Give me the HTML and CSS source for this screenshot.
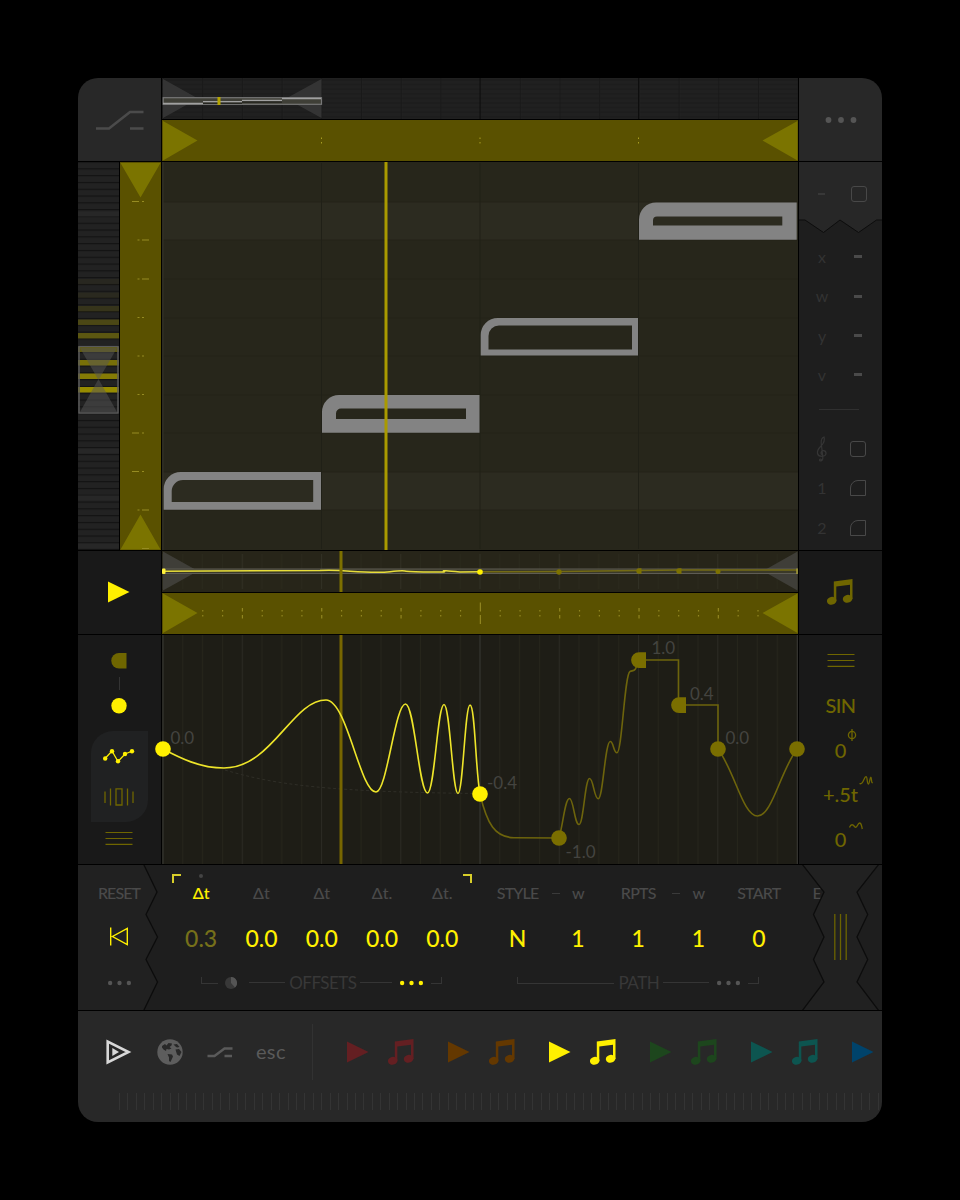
FILE: index.html
```html
<!DOCTYPE html>
<html lang="en">
<head>
  <meta charset="UTF-8" />
  <meta name="viewport" content="width=device-width, initial-scale=1.0"/>
  <title>Sequencer</title>
  <link rel="stylesheet" href="styles.css">
</head>
<body>
  <svg class="defs" width="0" height="0">
    <symbol id="music" viewBox="0 0 26 26">
      <path d="M6.8 2.5L25.5 0V20H23V5.7L9.3 7.5V22H6.8Z"/>
      <ellipse cx="4.7" cy="21.8" rx="4.8" ry="3.9" transform="rotate(-12 4.7 21.8)"/>
      <ellipse cx="20.6" cy="19.8" rx="4.8" ry="3.9" transform="rotate(-12 20.6 19.8)"/>
    </symbol>
    <symbol id="play" viewBox="0 0 22 22"><path d="M0 0.5L21.5 11L0 21.5Z"/></symbol>
    <symbol id="menu" viewBox="0 0 28 14"><path d="M.5 1.5H27.5M.5 7.5H27.5M.5 13.3H27.5" fill="none" stroke="currentColor" stroke-width="1.2"/></symbol>
    <symbol id="dots" viewBox="0 0 32 8"><circle cx="3.5" cy="4" r="2.9"/><circle cx="16" cy="4" r="2.9"/><circle cx="28.5" cy="4" r="2.9"/></symbol>
  </svg>

  <div class="device">
    <div class="corner">
      <svg class="slope" viewBox="0 0 48 20" width="48" height="20"><path d="M0 18.5H13L34 2H47.5M34 18.5H47.5"/></svg>
    </div>

    <div class="stack">
      <svg viewBox="162 78 636 41">
        <defs>
          <pattern id="rows" x="162" y="79" width="20" height="4.6" patternUnits="userSpaceOnUse"><path d="M0 1H20" stroke="#1a1a1a"/></pattern>
          <pattern id="cols" x="162.5" y="78" width="39.7" height="41" patternUnits="userSpaceOnUse"><path d="M.5 0V41" stroke="#191919"/></pattern>
        </defs>
        <rect x="162" y="78" width="636" height="41" fill="#202020"/>
        <rect x="162" y="78" width="636" height="41" fill="url(#rows)"/>
        <rect x="162" y="78" width="636" height="41" fill="url(#cols)"/>
        <path d="M480 78V119M638.5 78V119" stroke="#0e0e0e"/>
        <path d="M163 79L198 98.5L163 118ZM321.5 79L286 98.5L321.5 118Z" fill="#383838" opacity=".85"/>
        <rect x="163.2" y="97.7" width="158.3" height="6.6" fill="#3f3f37" stroke="#777" stroke-width="1.2"/>
        <path d="M163 103.6H203M203 101.8H242M242 100.4H282M282 98.6H321" stroke="#a0a0a0" stroke-width="1.5"/>
        <path d="M203 103.2H242M242 102H282" stroke="#15150f"/>
        <path d="M219 97V105" stroke="#b5a500" stroke-width="3"/>
      </svg>
      <svg viewBox="162 120 636 41">
        <rect x="162" y="120" width="636" height="41" fill="#5a5100"/>
        <path d="M163 121L197.500 140.500L163 160.500ZM797.500 121L762.500 140.500L797.500 160.500Z" fill="#7b7400"/>
        <path d="M321.500 137.500V139M321.500 142V143.500M480 137.500V139M480 142V143.500M638.500 137.500V139M638.500 142V143.500" stroke="#a79d22"/>
      </svg>
    </div>

    <div class="corner"><svg class="more" width="32" height="8"><use href="#dots"/></svg></div>

    <div class="keys">
      <svg viewBox="78 162 41 388">
        <defs>
          <pattern id="semis" x="78" y="161.500" width="41" height="6.800" patternUnits="userSpaceOnUse">
            <rect width="41" height="6.800" fill="#222"/><rect width="41" height="1.200" fill="#131313"/>
          </pattern>
        </defs>
        <rect x="78" y="162" width="41" height="388" fill="url(#semis)"/>
        <path d="M78 214H119M78 451H119M78 498H119M78 546H119" stroke="#272727" stroke-width="5"/>
        <g id="degrees"></g>
        <path d="M80 348H117L98.500 380ZM80 412H117L98.500 379Z" fill="#555" opacity=".5"/>
        <rect x="79" y="346.500" width="39" height="66.500" fill="none" stroke="#5a5a5a" stroke-width="1.500"/>
      </svg>
      <svg viewBox="120 162 41 388">
        <rect x="120" y="162" width="41" height="388" fill="#5a5100"/>
        <path d="M120.500 163H160.500L140.500 197.500ZM120.500 549.500H160.500L140.500 514.500Z" fill="#7b7400"/>
        <g stroke="#968c22" stroke-width="1">
          <path d="M132 201.500H139M142 201.500H144M132 433H139M142 433H144M132 471.500H139M142 471.500H144"/>
          <path d="M137.500 240H139.500M142 240H149M137.500 279H139.500M142 279H149M137.500 510H139.500M142 510H149M142 548.500H149"/>
          <path d="M137.500 317.500H139.500M142 317.500H144M137.500 356H139.500M142 356H144M137.500 394.500H139.500M142 394.500H144"/>
        </g>
      </svg>
    </div>

    <svg class="roll" viewBox="162 162 636 388">
      <rect x="162" y="162" width="636" height="388" fill="#27261b"/>
      <path d="M163 202H798V240H163ZM163 472H798V510H163Z" fill="#2c2b20"/>
      <path d="M163 202H798M163 240H798M163 279H798M163 318H798M163 356H798M163 395H798M163 433H798M163 472H798M163 510H798" stroke="#242319"/>
      <path d="M321.500 163V549M480 163V549M638.500 163V549" stroke="#202017"/>
      <path d="M163 162V550" stroke="#34332a"/>
      <g fill="#838383" fill-rule="evenodd">
        <path d="M163.700 509.700V489A17 17 0 0 1 180.700 472H321V509.700ZM171.700 502H313.200V480H183A11.300 11.300 0 0 0 171.700 491Z"/>
        <path d="M322 432.700V412A17 17 0 0 1 339 395H479.500V432.700ZM336 419H466V408.500H341A5 5 0 0 0 336 413.500Z"/>
        <path d="M480.700 355.500V335A17 17 0 0 1 497.700 318H638V355.500ZM488.500 349.500H632V325.500H499A10.500 10.500 0 0 0 488.500 336Z"/>
        <path d="M639 239.800V219.500A17 17 0 0 1 656 202.500H796.700V239.800ZM653 225.500H782.300V216.500H657A4 4 0 0 0 653 220.500Z"/>
      </g>
      <path d="M386 162V550" stroke="#a99a00" stroke-width="3"/>
    </svg>

    <div class="tools">
      <svg class="torn" viewBox="799 162 83 72" width="83" height="72"><path d="M798 161H883V220H876.500L858.500 232.500L840 220L823.500 232.500L805 220H798Z"/></svg>
      <div class="tool tool-top"><span class="dash"></span><i class="box"></i></div>
      <div class="tool"><span>x</span><b></b></div>
      <div class="tool"><span>w</span><b></b></div>
      <div class="tool"><span>y</span><b></b></div>
      <div class="tool"><span>v</span><b></b></div>
      <hr>
      <div class="tool">
        <svg class="clef" viewBox="0 0 12 26" width="12" height="26"><path d="M4.500 24.500C6.500 25 7 23 6.800 21L5.200 7C5 3 6.500 1.500 8 1C9 4 8 7 5 10C2 13 1 15 1.500 17.500C2.500 21.500 9.500 21 10 17.500C10.200 14 5 13.500 5 17C5 18 5.500 18.500 6.200 18.700"/><circle cx="4.500" cy="24" r="1"/></svg>
        <i class="box"></i>
      </div>
      <div class="tool"><span>1</span><i class="box cut"></i></div>
      <div class="tool"><span>2</span><i class="box cut"></i></div>
    </div>

    <div class="cell dark"><svg class="lit" width="22" height="22"><use href="#play"/></svg></div>

    <div class="stack">
      <svg viewBox="162 551 636 41">
        <defs><pattern id="beats" x="162.500" y="551" width="79.250" height="41" patternUnits="userSpaceOnUse">
          <path d="M20.300 3V38M40 3V38M60 3V38" stroke="#2a291c"/><path d="M.5 3V38" stroke="#313024"/>
        </pattern></defs>
        <rect x="162" y="551" width="636" height="41" fill="#272519"/>
        <rect x="162" y="551" width="636" height="41" fill="url(#beats)"/>
        <path d="M163 551.500L198 571L163 590.500ZM797.500 551.500L763 571L797.500 590.500Z" fill="#3f3e38"/>
        <rect x="163" y="569" width="634.500" height="4.500" fill="#3a3929" stroke="#5e5c54"/>
        <path d="M480 571.800L560 571.500L640 570.500L680 570H797" stroke="#746b14" fill="none" stroke-width="1.500"/>
        <path d="M163 571.300L320 570.500Q335 570 350 571.200Q378 573 390 571.700T405 571T428 572T444 571.200T460 572L480 571.800" stroke="#e8de3a" fill="none" stroke-width="1.500"/>
        <path d="M341 551V592" stroke="#7d7000" stroke-width="3"/>
        <circle cx="480" cy="572" r="2.800" fill="#fff000"/><rect x="162" y="568.500" width="3.500" height="5.500" rx="1" fill="#fff13a"/>
        <g fill="#7d7200"><circle cx="559" cy="572" r="2.700"/><path d="M639 568.300H641.500V573.700H639A2.700 2.700 0 0 1 639 568.300ZM679 568.300H681.500V573.700H679A2.700 2.700 0 0 1 679 568.300Z"/><circle cx="718" cy="571.500" r="2.500"/></g>
        <path d="M797 568.500V574" stroke="#a49b35" stroke-width="1.500"/>
      </svg>
      <svg viewBox="162 593 636 41">
        <rect x="162" y="593" width="636" height="41" fill="#5a5100"/>
        <path d="M163 593.500L197.500 613L163 633ZM797.500 593.500L762.500 613L797.500 633Z" fill="#7b7400"/>
        <g id="ticks" fill="#918620"></g>
      </svg>
    </div>

    <div class="cell dark"><svg class="dim" width="26" height="26"><use href="#music"/></svg></div>

    <div class="modes">
      <svg class="dim" width="16" height="16"><path d="M8 0H15.500V15.500H8A7.750 7.750 0 0 1 8 0Z"/></svg>
      <span class="link"></span>
      <svg class="lit" width="16" height="16"><circle cx="8" cy="7.800" r="7.700"/></svg>
      <div class="tabs">
        <svg class="lit" viewBox="0 0 32 16" width="32" height="16"><path d="M2 10.500L9 3L15 13.500L22 6L29.500 3" fill="none" stroke="currentColor" stroke-width="1.300"/><circle cx="2.200" cy="10.500" r="2.200"/><circle cx="9" cy="3.200" r="2.200"/><circle cx="15" cy="13.200" r="2.200"/><circle cx="22" cy="6" r="2.200"/><circle cx="29" cy="3.200" r="2.200"/></svg>
        <svg class="dim" viewBox="0 0 30 18" width="30" height="18"><path d="M1 3.500V15M6.500 .5V17.500M12 .8H18V17H12ZM23.500 .5V17.500M29 3.500V15" fill="none" stroke="currentColor" stroke-width="1.300"/></svg>
      </div>
      <svg class="dim" width="28" height="14"><use href="#menu"/></svg>
    </div>

    <svg class="graph" viewBox="162 635 636 229">
      <defs><pattern id="grid" x="162.500" y="635" width="79.250" height="229" patternUnits="userSpaceOnUse">
        <path d="M20.300 0V229M40 0V229M60 0V229" stroke="#26251b"/><path d="M.5 0V229" stroke="#2b2a23"/>
      </pattern></defs>
      <rect x="162" y="635" width="636" height="229" fill="#1e1d16"/>
      <rect x="162" y="635" width="636" height="229" fill="url(#grid)"/>
      <path d="M163 635V864M480 635V864M797.500 635V864" stroke="#33322e"/>
      <path d="M225 770C275 785 330 792 480 793.500" fill="none" stroke="#2f2e27" stroke-dasharray="3 2.500"/>
      <path d="M341 635V864" stroke="#776600" stroke-width="3"/>
      <g class="values">
        <text x="170.500" y="743.500">0.0</text><text x="487" y="788.500">-0.4</text><text x="565.500" y="858">-1.0</text>
        <text x="651.500" y="654">1.0</text><text x="690" y="699.500">0.4</text><text x="725.500" y="743.500">0.0</text>
      </g>
      <path class="curve-dim" d="M480 794C487 824 495 837.500 514 837.700L559 838C563 825 565 798.500 569.500 798.500C573.500 798.500 574.500 824.500 579 824.500C583.500 824.500 585 778.500 589.500 778.500C593.500 778.500 594 798.700 598.300 798.700C603 798.700 605 741.500 610.300 741.500C613.500 741.500 613.500 752.700 617 752.700C622 752.700 624.500 674 630 671.500C634 670 636 672 637 662L639 660H678.500V705H718V749C735 772 743 816 757.500 816C772 816 780 772 797 749"/>
      <path class="curve" d="M163 749C180 758 200 768 224 768C272 768 292 700 326 700C347 700 360 792 376 792C387 792 395 704 405.500 704C414.500 704 419 793 427.500 793C434.500 793 437.500 704.500 444 704.500C450 704.500 452.500 793.500 458 793.500C463 793.500 465 705 470 705C475 705 475.500 770 480 794"/>
      <g fill="#7a6e00">
        <circle cx="559" cy="838" r="7.800"/><circle cx="718" cy="749" r="7.800"/>
        <path d="M639 652.200H646V668H639A7.900 7.900 0 0 1 639 652.200ZM679 697.200H686V713H679A7.900 7.900 0 0 1 679 697.200Z"/>
        <circle cx="797" cy="749" r="7.800"/>
      </g>
      <g fill="#fff000"><circle cx="163" cy="749" r="7.800"/><circle cx="480" cy="794" r="7.800"/></g>
    </svg>

    <div class="wave dim">
      <div><svg width="28" height="14"><use href="#menu"/></svg></div>
      <div class="shape">SIN</div>
      <div>0<svg class="sup phi" viewBox="0 0 10 12" width="10" height="12"><circle cx="5" cy="6" r="3.600"/><path d="M5 0V12"/></svg></div>
      <div>+.5t<svg class="sup chirp" viewBox="0 0 15 9" width="15" height="9"><path d="M.5 7.500C4 9.500 5 .7 7 .7C8.500 .7 8 8 9.300 8S10.800 1.200 11.800 1.200S12 8 13.800 6.500"/></svg></div>
      <div>0<svg class="sup ripple" viewBox="0 0 14 8" width="14" height="8"><path d="M.5 5.500C2 1.500 4 2.500 5.500 4.500C8 7.500 8.500 1 10.500 1S12.500 4 13.300 7"/></svg></div>
    </div>

    <div class="params">
      <svg class="tear" viewBox="78 865 83 145" width="83" height="145"><path d="M77 864H143.500L157 892L146 914.500L157.500 937L146 959.500L157.500 982L143.500 1011H77Z"/></svg>
      <div class="reset">
        <span>RESET</span>
        <svg class="lit" viewBox="0 0 20 20" width="20" height="20"><path d="M1.700 .5V18.500M18.300 1.500V17.500L3.500 9.500Z" fill="none" stroke="currentColor" stroke-width="1.400"/></svg>
        <svg class="more" width="25" height="6"><use href="#dots"/></svg>
      </div>
      <div class="group offsets">
        <div class="field on"><label>Δt</label><span>0.3</span></div>
        <div class="field"><label>Δt</label><span>0.0</span></div>
        <div class="field"><label>Δt</label><span>0.0</span></div>
        <div class="field"><label>Δt.</label><span>0.0</span></div>
        <div class="field"><label>Δt.</label><span>0.0</span></div>
        <div class="legend">
          <i class="end start"></i><svg class="ball" width="12" height="12"><circle cx="6" cy="6" r="6" fill="#383838"/><path d="M6 0A6 6 0 0 1 10 10.500L6 6Z" fill="#555"/></svg>
          <i class="rule"></i><span>OFFSETS</span><i class="rule short"></i>
          <svg class="lit" width="25" height="6"><use href="#dots"/></svg><i class="end"></i>
        </div>
      </div>
      <div class="group path">
        <div class="field linked"><label>STYLE</label><span>N</span></div>
        <div class="field"><label>w</label><span>1</span></div>
        <div class="field linked"><label>RPTS</label><span>1</span></div>
        <div class="field"><label>w</label><span>1</span></div>
        <div class="field"><label>START</label><span>0</span></div>
        <div class="field last"><label>E</label></div>
        <div class="legend">
          <i class="end start"></i><span>PATH</span><i class="rule"></i>
          <svg class="more" width="25" height="6"><use href="#dots"/></svg><i class="end"></i>
        </div>
      </div>
      <svg class="tear right" viewBox="799 865 83 145" width="83" height="145">
        <path d="M802 864L824 892L813.500 914.500L824 937L813.500 959.500L824 982L802 1011H879L857 982L867.700 959.500L857 937L867.700 914.500L857 892L879 864Z"/>
        <path class="grip" d="M834.800 914V960M840.500 914V960M846.200 914V960"/>
      </svg>
    </div>

    <div class="footer">
      <div class="bar">
        <div class="slot"><svg viewBox="0 0 26 26" width="26" height="26"><path d="M1.700 2.500V23.500L22.500 13Z" fill="none" stroke="#d8d8d8" stroke-width="2.600"/><path d="M6.300 9V17L13 13Z" fill="#d8d8d8"/></svg></div>
        <div class="slot"><svg viewBox="0 0 26 26" width="26" height="26"><circle cx="13" cy="13" r="12.700" fill="#5d5d5d"/><path d="M5 7L8 5L9.500 6.500L11.500 4L15 4.500L14.500 6.500L12.500 8L14.500 9.500L12 10.500L9.500 10L9 12L6.500 10.500L5 8.500ZM16.500 5.500L20 5L22.500 8L20 8.500L18.500 7.500ZM18.500 10.500L22 10L24.500 13L22.500 17L20 15.500ZM10.500 15L15 15.500L16 17.500L13.500 23L12 22L12 18.500Z" fill="#282828"/></svg></div>
        <div class="slot"><svg viewBox="0 0 26 12" width="26" height="12"><path d="M.5 10H7.500L17.500 2.500H25.500M17.500 10H25" fill="none" stroke="#5a5a5a" stroke-width="2.400"/></svg></div>
        <div class="slot esc">esc</div>
        <span class="sep"></span>
        <div class="tracks">
          <div class="track red"><svg width="22" height="22"><use href="#play"/></svg><svg width="26" height="26"><use href="#music"/></svg></div>
          <div class="track orange"><svg width="22" height="22"><use href="#play"/></svg><svg width="26" height="26"><use href="#music"/></svg></div>
          <div class="track lit"><svg width="22" height="22"><use href="#play"/></svg><svg width="26" height="26"><use href="#music"/></svg></div>
          <div class="track green"><svg width="22" height="22"><use href="#play"/></svg><svg width="26" height="26"><use href="#music"/></svg></div>
          <div class="track teal"><svg width="22" height="22"><use href="#play"/></svg><svg width="26" height="26"><use href="#music"/></svg></div>
          <div class="track blue"><svg width="22" height="22"><use href="#play"/></svg></div>
        </div>
      </div>
      <div class="jog"></div>
    </div>
  </div>

  <script>
    const NS = 'http://www.w3.org/2000/svg';

    function addRect(parent, x, y, width, height, opacity) {
      const rect = document.createElementNS(NS, 'rect');
      const attrs = { x, y, width, height, opacity };
      Object.keys(attrs).forEach(key => rect.setAttribute(key, attrs[key]));
      parent.appendChild(rect);
    }

    // Scale degrees, getting brighter toward the playing note
    const degrees = document.getElementById('degrees');
    degrees.setAttribute('fill', '#968b00');
    [0.05, 0.07, 0.18, 0.36, 0.5, 0.55, 0.75, 0.85, 1].forEach((opacity, i) => {
      addRect(degrees, 78, 279 + i * 13.5, 41, 5.5, opacity);
    });

    // Beat ruler: dots on steps, dashes on beats, a long dash in the middle
    const ticks = document.getElementById('ticks');
    for (let i = 2; i < 31; i++) {
      const x = 162.5 + i * 19.83;
      const len = i === 16 ? 9 : i % 4 === 0 ? 3.5 : 1.5;
      addRect(ticks, x, 611.5 - len, 1.2, len, 1);
      addRect(ticks, x, 615, 1.2, len, 1);
    }
  </script>
</body>
</html>
```

FILE: styles.css
```css
* {
  box-sizing: border-box;
}
body {
  margin: 0;
  height: 1200px;
  padding: 78px;
  background: #000;
  color: #4a4a4a;
  font-family: Lato, "Liberation Sans", sans-serif;
  overflow: hidden;
}
svg {
  display: block;
  flex-shrink: 0;
  fill: currentColor;
}
.defs {
  position: absolute;
}
.device {
  width: 804px;
  height: 1044px;
  display: grid;
  grid-template-columns: 83px 636px 83px;
  grid-template-rows: 83px 388px 83px 229px 145px 111px;
  gap: 1px;
  border-radius: 20px;
  overflow: hidden;
}
.corner, .cell {
  display: flex;
  align-items: center;
  justify-content: center;
  background: #282828;
}
.cell {
  padding: 0 1px 2px 0;
}
.dark {
  background: #191919;
}
.lit {
  color: #fff000;
}
.dim {
  color: #6f6600;
}
.more {
  color: #555;
}
.slope {
  fill: none;
  stroke: #4b4b4b;
  stroke-width: 2.6;
}
.stack {
  display: grid;
  grid-template-rows: 41px 41px;
  gap: 1px;
}
.keys {
  display: grid;
  grid-template-columns: 41px 41px;
  gap: 1px;
}

/* note tools */
.tools {
  position: relative;
  background: #1e1e1e;
}
.torn {
  position: absolute;
  top: 0;
  left: 0;
  fill: #272727;
  stroke: #0d0d0d;
}
.tool {
  position: relative;
  height: 39.3px;
  padding: 0 16px 0 10px;
  display: flex;
  align-items: center;
  justify-content: space-between;
  font-size: 16px;
  color: #333;
}
.tool span {
  width: 26px;
  padding-bottom: 1px;
  text-align: center;
}
.tool b {
  width: 8px;
  height: 3px;
  margin-right: 4px;
  background: #4a4a4a;
}
.tool-top {
  margin: 12px 0 24px;
  padding-right: 15px;
}
.tool .dash {
  width: 7px;
  height: 2px;
  margin-left: 9px;
  padding: 0;
  background: #383838;
}
.box {
  width: 16px;
  height: 16px;
  border: 1.5px solid #484848;
  border-radius: 3px;
}
.box.cut {
  border-radius: 8px 0 0 0;
}
.clef {
  margin-left: 7px;
  fill: none;
  stroke: #353535;
  stroke-width: 1.2;
}
.tools hr {
  width: 40px;
  height: 1px;
  margin: 15px auto 19px 20px;
  border: 0;
  background: #303030;
}

/* curve editor */
.graph {
  position: relative;
  overflow: visible;
  z-index: 1;
}
.curve, .curve-dim {
  fill: none;
  stroke: #eee52a;
  stroke-width: 1.6;
}
.curve-dim {
  stroke: #6d640c;
}
.values {
  font-size: 17px;
  fill: #444440;
}
.modes {
  display: flex;
  flex-direction: column;
  align-items: center;
  padding: 18px 1px 0 0;
  background: #191919;
}
.link {
  width: 1px;
  height: 13px;
  margin: 8px 0;
  background: #333;
}
.tabs {
  width: 57px;
  height: 91px;
  margin: 17px 0 9px;
  padding: 17px 0 16px;
  display: flex;
  flex-direction: column;
  align-items: center;
  justify-content: space-between;
  background: #202122;
  border-radius: 22px 0 22px 0;
}
.wave {
  padding-top: 3px;
  background: #191919;
  font-size: 20px;
  font-weight: 500;
}
.wave div {
  position: relative;
  height: 44.7px;
  display: flex;
  align-items: center;
  justify-content: center;
}
.shape {
  letter-spacing: -0.6px;
}
.sup {
  position: absolute;
  fill: none;
  stroke: currentColor;
  stroke-width: 1.3;
}
.phi {
  left: 48px;
  top: 2px;
}
.chirp {
  left: 60px;
  top: 4px;
}
.ripple {
  left: 50px;
  top: 5px;
}

/* parameters */
.params {
  position: relative;
  grid-column: 1 / 4;
  display: flex;
  overflow: hidden;
  background: #1e1e1e;
}
.tear {
  position: absolute;
  top: 0;
  left: 0;
  fill: #212121;
  stroke: #0c0c0c;
  stroke-width: 1.3;
}
.tear.right {
  left: auto;
  right: 0;
}
.tear .grip {
  stroke: #6b6300;
}
.reset {
  position: relative;
  width: 83px;
  padding: 17px 1px 0 0;
  display: grid;
  grid-template-rows: 21px 68px 23px;
  align-items: center;
  justify-items: center;
  font-size: 16px;
  font-weight: 500;
  letter-spacing: -0.9px;
}
.group {
  position: relative;
  flex-shrink: 0;
  display: grid;
  grid-auto-columns: 60.3px;
  grid-template-rows: 21px 68px 23px;
  align-items: center;
  padding-top: 17px;
}
.offsets {
  margin-left: 10px;
}
.path {
  margin-left: 15px;
}
.field {
  grid-row: 1 / 3;
  display: grid;
  grid-template-rows: 21px 68px;
  align-items: center;
  justify-items: center;
  position: relative;
}
.field label {
  font-size: 16px;
  font-weight: 500;
  white-space: nowrap;
}
.path label {
  letter-spacing: -0.8px;
}
.last {
  padding-right: 5px;
}
.field span {
  padding-top: 1px;
  font-size: 23px;
  font-weight: 500;
  color: #fff000;
}
.on label {
  color: #fff000;
  font-weight: 600;
}
.on span {
  color: #76701a;
}
.on::before {
  content: "";
  position: absolute;
  top: -8px;
  left: 28px;
  width: 4px;
  height: 4px;
  border-radius: 50%;
  background: #444;
}
.linked::after {
  content: "";
  position: absolute;
  top: 10.5px;
  right: -12px;
  width: 8px;
  height: 1.5px;
  background: #3a3a3a;
}
.offsets::before, .offsets::after {
  content: "";
  position: absolute;
  top: 9px;
  left: 1px;
  width: 7px;
  height: 7px;
  border: solid #d8ce2a;
  border-width: 2px 0 0 2px;
}
.offsets::after {
  left: 292px;
  border-width: 2px 2px 0 0;
}
.legend {
  grid-row: 3;
  grid-column: 1 / 6;
  display: flex;
  align-items: center;
  padding: 0 30px;
  font-size: 17px;
  letter-spacing: -0.5px;
  color: #383838;
}
.legend span {
  margin: 0 4px;
}
.rule {
  flex: 1;
  height: 1.5px;
  background: #353535;
}
.rule.short {
  flex: 0 0 32px;
}
.legend .ball {
  margin: 0 12px 0 7px;
}
.legend .lit, .legend .more {
  margin: 0 7px 0 7px;
}
.end {
  width: 11px;
  height: 7px;
  margin-top: -5px;
  border: solid #353535;
  border-width: 0 1.5px 1.5px 0;
}
.end.start {
  width: 17px;
  border-width: 0 0 1.5px 1.5px;
}
.path .end.start {
  width: 97px;
}

/* footer */
.footer {
  grid-column: 1 / 4;
  background: #282828;
  overflow: hidden;
}
.bar {
  height: 82px;
  padding-left: 15.5px;
  display: flex;
  align-items: center;
}
.slot {
  width: 50.7px;
  display: flex;
  justify-content: center;
  flex-shrink: 0;
}
.esc {
  padding-bottom: 3px;
  font-size: 20px;
  letter-spacing: 0.4px;
  color: #5a5a5a;
}
.sep {
  width: 1px;
  height: 56px;
  margin: 0 34px 0 16px;
  background: #323232;
  flex-shrink: 0;
}
.tracks {
  display: flex;
  gap: 33px;
}
.track {
  display: flex;
  align-items: center;
  gap: 19px;
}
.track + .track {
  margin-left: 1px;
}
.red {
  color: #641f22;
}
.orange {
  color: #643800;
}
.green {
  color: #1d461d;
}
.teal {
  color: #0d5550;
}
.blue {
  color: #00436b;
}
.jog {
  height: 17px;
  margin-left: 41px;
  background: repeating-linear-gradient(to right, #343434 0 1px, transparent 1px 8.43px);
}
```
